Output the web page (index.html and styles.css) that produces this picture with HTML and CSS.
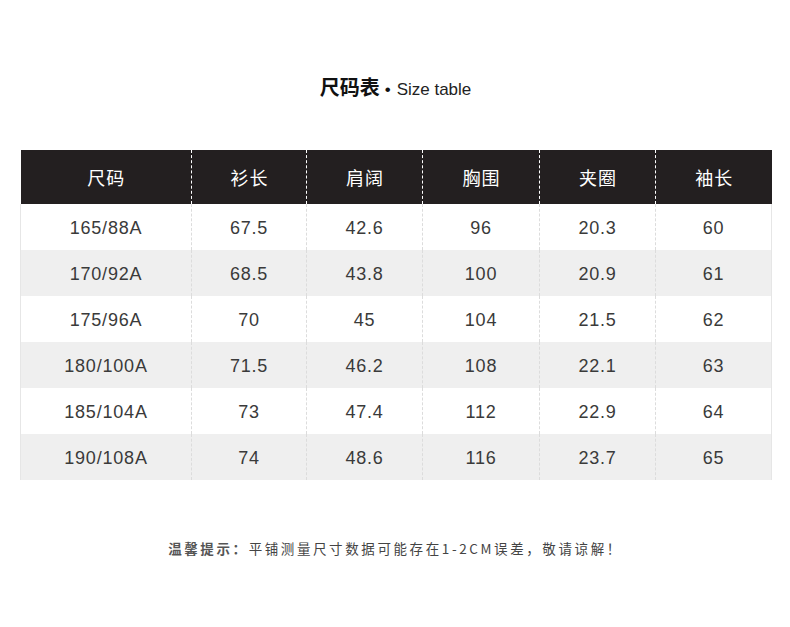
FILE: index.html
```html
<!DOCTYPE html>
<html lang="zh-CN">
<head>
<meta charset="utf-8">
<title>尺码表</title>
<link rel="stylesheet" href="styles.css">
</head>
<body>
<div class="page">
  <h1 class="title"><span class="title-cn">尺码表</span><span class="title-dot">•</span><span class="title-en">Size table</span></h1>
  <table class="size-table">
    <colgroup>
      <col class="c1"><col class="c2"><col class="c3"><col class="c4"><col class="c5"><col class="c6">
    </colgroup>
    <thead>
      <tr><th>尺码</th><th>衫长</th><th>肩阔</th><th>胸围</th><th>夹圈</th><th>袖长</th></tr>
    </thead>
    <tbody>
      <tr><td>165/88A</td><td>67.5</td><td>42.6</td><td>96</td><td>20.3</td><td>60</td></tr>
      <tr><td>170/92A</td><td>68.5</td><td>43.8</td><td>100</td><td>20.9</td><td>61</td></tr>
      <tr><td>175/96A</td><td>70</td><td>45</td><td>104</td><td>21.5</td><td>62</td></tr>
      <tr><td>180/100A</td><td>71.5</td><td>46.2</td><td>108</td><td>22.1</td><td>63</td></tr>
      <tr><td>185/104A</td><td>73</td><td>47.4</td><td>112</td><td>22.9</td><td>64</td></tr>
      <tr><td>190/108A</td><td>74</td><td>48.6</td><td>116</td><td>23.7</td><td>65</td></tr>
    </tbody>
  </table>
  <p class="note"><b>温馨提示：</b>平铺测量尺寸数据可能存在1-2CM误差，敬请谅解！</p>
</div>
</body>
</html>
```
FILE: styles.css
```css
* { box-sizing: border-box; }
html, body { margin: 0; padding: 0; background: #fff; }
body {
  font-family: "Liberation Sans", "Noto Sans CJK SC", sans-serif;
  color: #333;
}
.page {
  width: 790px;
  padding: 0 19px 0 20px;
}
.title {
  margin: 0;
  padding-top: 70px;
  height: 102px;
  line-height: 28px;
  text-align: center;
  font-weight: normal;
  color: #111;
}
.title-cn {
  font-family: "Noto Sans CJK SC", sans-serif;
  font-size: 20px;
  font-weight: 700;
}
.title-dot {
  font-family: "Liberation Sans", sans-serif;
  font-size: 17px;
  margin: 0 6px 0 5px;
}
.title-en {
  font-family: "Liberation Sans", sans-serif;
  font-size: 17px;
  color: #222;
}
.size-table {
  margin-top: 48px;
  width: 751px;
  border-collapse: collapse;
  table-layout: fixed;
}
.c1 { width: 171px; }
.c2 { width: 115px; }
.c3 { width: 116px; }
.c4 { width: 117px; }
.c5 { width: 116px; }
.c6 { width: 116px; }
.size-table th {
  height: 54px;
  padding: 0 0 0 1px;
  background: #231f20;
  color: #fff;
  font-family: "Noto Sans CJK SC", sans-serif;
  font-weight: normal;
  font-size: 18px;
  letter-spacing: 1px;
  border-left: 1px dashed #fff;
}
.size-table th:first-child { border-left: none; }
.size-table td {
  height: 46px;
  padding: 3px 0 0;
  text-align: center;
  font-size: 18px;
  letter-spacing: 0.8px;
  color: #3a3a3a;
  border-left: 1px dashed #dcdcdc;
}
.size-table td:first-child { border-left: 1px solid #e6e6e6; }
.size-table td:last-child { border-right: 1px solid #e6e6e6; }
.size-table tbody tr:nth-child(even) td { background: #efefef; }
.note {
  margin: 58px 0 0;
  line-height: 20px;
  text-align: center;
  font-family: "Noto Sans CJK SC", sans-serif;
  font-size: 13.5px;
  letter-spacing: 2.6px;
  color: #444;
}
.note b { color: #555; font-weight: 700; }
```
